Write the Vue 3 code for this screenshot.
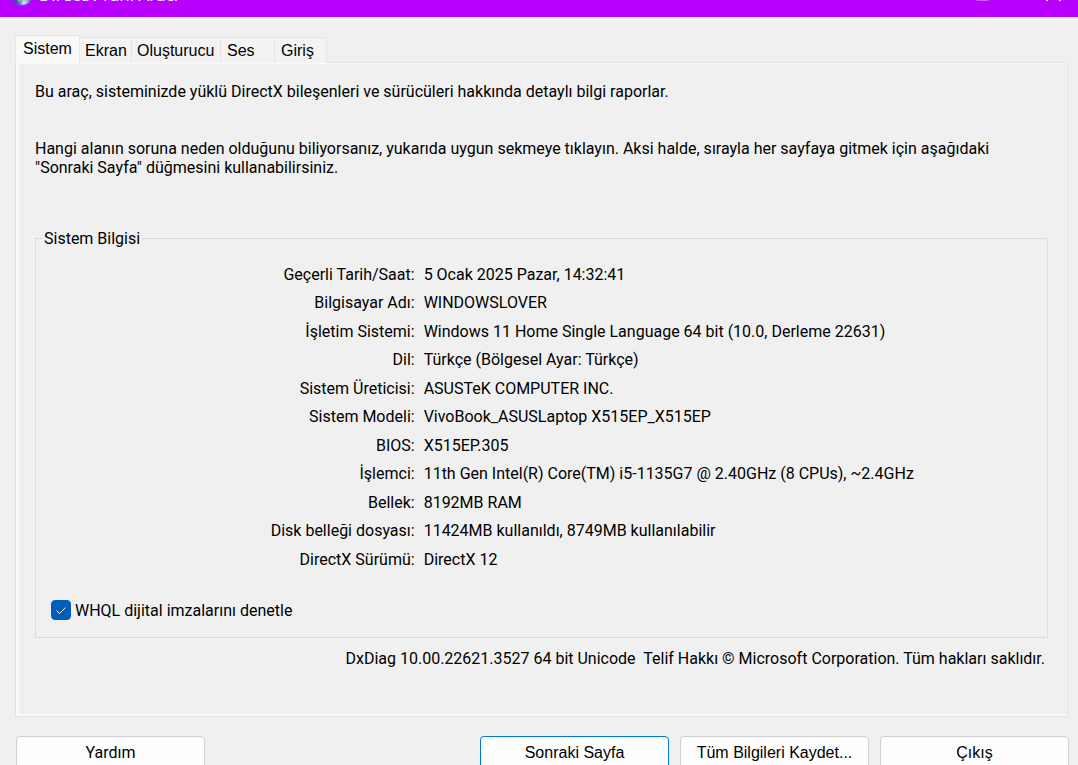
<script setup>
import { ref } from 'vue'

const tabs = [
  { id: 'sistem', label: 'Sistem' },
  { id: 'ekran', label: 'Ekran' },
  { id: 'olusturucu', label: 'Oluşturucu' },
  { id: 'ses', label: 'Ses' },
  { id: 'giris', label: 'Giriş' },
]
const active = ref('sistem')
const whql = ref(true)

const info = [
  ['Geçerli Tarih/Saat:', '5 Ocak 2025 Pazar, 14:32:41'],
  ['Bilgisayar Adı:', 'WINDOWSLOVER'],
  ['İşletim Sistemi:', 'Windows 11 Home Single Language 64 bit (10.0, Derleme 22631)'],
  ['Dil:', 'Türkçe (Bölgesel Ayar: Türkçe)'],
  ['Sistem Üreticisi:', 'ASUSTeK COMPUTER INC.'],
  ['Sistem Modeli:', 'VivoBook_ASUSLaptop X515EP_X515EP'],
  ['BIOS:', 'X515EP.305'],
  ['İşlemci:', '11th Gen Intel(R) Core(TM) i5-1135G7 @ 2.40GHz (8 CPUs), ~2.4GHz'],
  ['Bellek:', '8192MB RAM'],
  ['Disk belleği dosyası:', '11424MB kullanıldı, 8749MB kullanılabilir'],
  ['DirectX Sürümü:', 'DirectX 12'],
]
</script>

<template>
  <div class="window">
    <header class="titlebar">
      <div class="titlebar-row">
        <svg class="logo" viewBox="0 0 22 22" aria-hidden="true">
          <defs>
            <linearGradient id="globe" x1="0" y1="0" x2="1" y2="0">
              <stop offset="0" stop-color="#1a2a9c" />
              <stop offset="0.35" stop-color="#4a66cf" />
              <stop offset="0.6" stop-color="#d5e0fb" />
              <stop offset="1" stop-color="#3550c0" />
            </linearGradient>
          </defs>
          <circle cx="11" cy="11" r="10.5" fill="url(#globe)" stroke="#5a4fc0" />
          <path d="M5 5 L8 17.5 M17 5 L13 17.5" stroke="#d9c63a" stroke-width="1.5" />
        </svg>
        <h1 class="title">DirectX Tanı Aracı</h1>
        <button class="caption" type="button" aria-label="Ekranı Kapla" disabled>
          <svg viewBox="0 0 15 15"><rect x="0.5" y="0.5" width="14" height="13" rx="2" fill="none" stroke="#cf5cff" /></svg>
        </button>
        <button class="caption" type="button" aria-label="Kapat">
          <svg viewBox="0 0 15 15"><path d="M0.5 0 L14.5 14 M14.5 0 L0.5 14" stroke="#fff" stroke-width="1.5" /></svg>
        </button>
      </div>
    </header>

    <main class="body">
      <div class="tabs" role="tablist">
        <button
          v-for="t in tabs"
          :key="t.id"
          type="button"
          role="tab"
          class="tab"
          :class="[t.id, { active: active === t.id }]"
          :aria-selected="active === t.id"
          @click="active = t.id"
        >{{ t.label }}</button>
      </div>

      <section class="panel" role="tabpanel">
        <p class="intro">Bu araç, sisteminizde yüklü DirectX bileşenleri ve sürücüleri hakkında detaylı bilgi raporlar.</p>
        <p class="hint">Hangi alanın soruna neden olduğunu biliyorsanız, yukarıda uygun sekmeye tıklayın. Aksi halde, sırayla her sayfaya gitmek için aşağıdaki "Sonraki Sayfa" düğmesini kullanabilirsiniz.</p>

        <fieldset class="group">
          <legend>Sistem Bilgisi</legend>
          <dl class="info">
            <div v-for="[k, v] in info" :key="k" class="row">
              <dt>{{ k }}</dt>
              <dd>{{ v }}</dd>
            </div>
          </dl>
          <label class="check">
            <span class="box">
              <input v-model="whql" type="checkbox" />
              <svg v-if="whql" viewBox="0 0 20 20" aria-hidden="true">
                <path d="M5.5 10.5 L8.5 13.5 L14.5 7.5" fill="none" stroke="#fff" stroke-width="1" />
              </svg>
            </span>
            <span>WHQL dijital imzalarını denetle</span>
          </label>
        </fieldset>

        <p class="copyright">DxDiag 10.00.22621.3527 64 bit Unicode&nbsp; Telif Hakkı © Microsoft Corporation. Tüm hakları saklıdır.</p>
      </section>

      <footer class="actions">
        <button type="button" class="btn help">Yardım</button>
        <button type="button" class="btn primary">Sonraki Sayfa</button>
        <button type="button" class="btn">Tüm Bilgileri Kaydet...</button>
        <button type="button" class="btn">Çıkış</button>
      </footer>
    </main>
  </div>
</template>

<style>
body {
  background: #f0f0f0;
}
</style>

<style scoped>
.window {
  height: 100vh;
  overflow: hidden;
  background: #f0f0f0;
  color: #000;
  font: 16px/19px Roboto, "Noto Sans", sans-serif;
}

button {
  font-family: "Liberation Sans", Arial, sans-serif;
  font-size: 16px;
  color: #000;
}

.titlebar {
  display: flex;
  align-items: flex-end;
  height: 17px;
  overflow: hidden;
  background: #b900ff;
}

.titlebar-row {
  flex: 1;
  display: flex;
  align-items: center;
  height: 45px;
  padding: 0 17px 0 11px;
}

.logo {
  width: 22px;
  height: 22px;
  margin-right: 6px;
}

.title {
  flex: 1;
  margin: 0;
  color: #fff;
  font: 17px/20px "Open Sans", "Noto Sans", sans-serif;
}

.caption {
  width: 15px;
  height: 15px;
  margin-left: 56px;
  padding: 0;
  border: 0;
  background: none;
}

.caption svg {
  display: block;
}

.body {
  padding: 18px 10px 0 15px;
}

.tabs {
  display: flex;
  align-items: flex-end;
}

.tab {
  height: 26px;
  padding: 0 5px;
  border: 1px solid #e5e5e5;
  border-left: 0;
  border-bottom: 0;
  background: #f3f3f3;
  text-align: left;
  white-space: nowrap;
}

.tab.active {
  height: 29px;
  padding: 0 7px 3px;
  border-left: 1px solid #e5e5e5;
  margin-bottom: -1px;
  background: #f9f9f9;
  position: relative;
}

.sistem { width: 65px; }
.ekran { width: 52px; }
.olusturucu { width: 89px; }
.tab.ses { width: 54px; padding-left: 6px; }
.tab.giris { width: 52px; padding-left: 6px; }

.panel {
  margin-top: -1px;
  padding: 19px 19px 48px 16px;
  border: 1px solid #e3e3e3;
  box-shadow: inset 3px -2px 0 #f9f9f9, inset -1px 1px 0 #f9f9f9;
}

.intro {
  margin: 0 0 38px 3px;
}

.hint {
  margin: 0 40px 52px 3px;
}

.group {
  min-width: 0;
  margin: 0 0 0 3px;
  padding: 17px 14px;
  border: 1px solid #dcdcdc;
}

.group legend {
  margin-left: -8px;
  padding: 0 2px;
}

.info {
  margin: 0 0 22px 1px;
}

.row {
  display: grid;
  grid-template-columns: 37fr 62fr;
  column-gap: 9px;
  height: 28px;
}

.row:nth-child(even) {
  height: 29px;
}

dt {
  text-align: right;
  white-space: nowrap;
}

dd {
  margin: 0;
  white-space: nowrap;
}

.check {
  display: flex;
  align-items: center;
  width: fit-content;
  margin-left: 1px;
  gap: 4px;
}

.box {
  display: grid;
  width: 20px;
  height: 20px;
}

.box > * {
  grid-area: 1 / 1;
}

.box input {
  appearance: none;
  width: 20px;
  height: 20px;
  margin: 0;
  border: 1px solid #868686;
  border-radius: 4px;
  background: #fff;
}

.box input:checked {
  border-color: #005fb8;
  background: #005fb8;
}

.box svg {
  pointer-events: none;
}

.copyright {
  margin: 11px 3px 0 0;
  text-align: right;
}

.actions {
  display: flex;
  gap: 11px;
  margin: 19px -1px 0 1px;
}

.btn {
  width: 189px;
  height: 34px;
  padding: 0 0 1px;
  border: 1px solid #d0d0d0;
  border-radius: 4px;
  background: #fdfdfd;
}

.btn.primary {
  border-color: #0078d4;
}

.help {
  margin-right: auto;
  font-family: Roboto, "Noto Sans", sans-serif;
}
</style>
